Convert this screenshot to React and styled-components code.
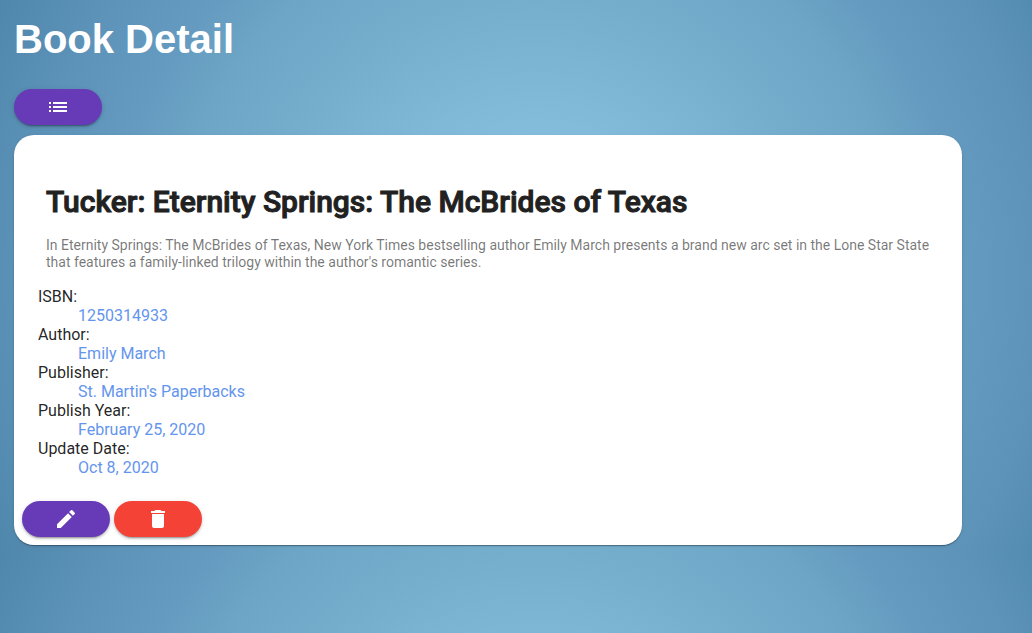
import React from "react";
import styled, { createGlobalStyle } from "styled-components";
import { MdList, MdEdit, MdDelete } from "react-icons/md";

const GlobalStyle = createGlobalStyle`
  html {
    background: radial-gradient(
      circle at 52% 50%,
      #93ccea 0%,
      #83bcdb 25%,
      #75aecd 46%,
      #6ca5c5 61%,
      #659bc0 70%,
      #5d93b9 84%,
      #4f86ab 100%
    );
  }
  body {
    margin: 0;
    font-family: Roboto, "Liberation Sans", sans-serif;
  }
`;

const Page = styled.main`
  display: flex;
  flex-direction: column;
  align-items: flex-start;
  padding: 16px 70px 8px 14px;
`;

const PageTitle = styled.h1`
  margin: 0 0 27px;
  color: #fff;
  font: 700 40px/46px "Liberation Sans", Arial, sans-serif;
`;

const PillButton = styled.button`
  display: flex;
  align-items: center;
  justify-content: center;
  width: 88px;
  height: 36px;
  padding: 0;
  border: 0;
  border-radius: 20px;
  color: #fff;
  background: ${({ $tone }) => ($tone === "warn" ? "#f44336" : "#673ab7")};
  box-shadow: 0 3px 1px -2px rgba(0, 0, 0, 0.2), 0 2px 2px 0 rgba(0, 0, 0, 0.14),
    0 1px 5px 0 rgba(0, 0, 0, 0.12);
  cursor: pointer;

  svg {
    width: 24px;
    height: 24px;
  }
`;

const Card = styled.article`
  align-self: stretch;
  margin-top: 10px;
  padding: 48px 8px 8px;
  border-radius: 20px;
  background: #fff;
  color: rgba(0, 0, 0, 0.87);
  box-shadow: 0 2px 1px -1px rgba(0, 0, 0, 0.2), 0 1px 1px 0 rgba(0, 0, 0, 0.14),
    0 1px 3px 0 rgba(0, 0, 0, 0.12);
`;

const CardHeader = styled.header`
  padding: 0 24px;
`;

const BookTitle = styled.h2`
  margin: 0 0 16px;
  color: #212121;
  font-size: 30px;
  line-height: 38px;
  font-weight: 500;
  -webkit-text-stroke: 1px currentColor;
`;

const Summary = styled.p`
  margin: 0;
  color: rgba(0, 0, 0, 0.54);
  font-size: 14px;
  line-height: 17px;
`;

const Facts = styled.dl`
  margin: 16px;
  margin-bottom: 24px;
  font-size: 16px;
  line-height: 19px;
`;

const FactValue = styled.dd`
  margin: 0 0 0 40px;
  color: #6495ed;
`;

const Actions = styled.div`
  display: flex;
  gap: 4px;
`;

const facts = [
  ["ISBN:", "1250314933"],
  ["Author:", "Emily March"],
  ["Publisher:", "St. Martin's Paperbacks"],
  ["Publish Year:", "February 25, 2020"],
  ["Update Date:", "Oct 8, 2020"],
];

export default function App() {
  return (
    <>
      <GlobalStyle />
      <Page>
        <PageTitle>Book Detail</PageTitle>
        <PillButton type="button" aria-label="Book list">
          <MdList />
        </PillButton>
        <Card>
          <CardHeader>
            <BookTitle>Tucker: Eternity Springs: The McBrides of Texas</BookTitle>
            <Summary>
              In Eternity Springs: The McBrides of Texas, New York Times bestselling author Emily
              March presents a brand new arc set in the Lone Star State that features a
              family-linked trilogy within the author's romantic series.
            </Summary>
          </CardHeader>
          <Facts>
            {facts.map(([label, value]) => (
              <React.Fragment key={label}>
                <dt>{label}</dt>
                <FactValue>{value}</FactValue>
              </React.Fragment>
            ))}
          </Facts>
          <Actions>
            <PillButton type="button" aria-label="Edit book">
              <MdEdit />
            </PillButton>
            <PillButton type="button" $tone="warn" aria-label="Delete book">
              <MdDelete />
            </PillButton>
          </Actions>
        </Card>
      </Page>
    </>
  );
}
